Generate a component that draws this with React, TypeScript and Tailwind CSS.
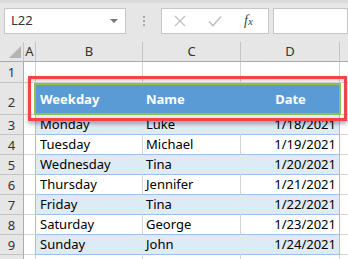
import React from "react";

// Sample table shown in the sheet
const rows = [
  { day: "Monday", name: "Luke", date: "1/18/2021" },
  { day: "Tuesday", name: "Michael", date: "1/19/2021" },
  { day: "Wednesday", name: "Tina", date: "1/20/2021" },
  { day: "Thursday", name: "Jennifer", date: "1/21/2021" },
  { day: "Friday", name: "Tina", date: "1/22/2021" },
  { day: "Saturday", name: "George", date: "1/23/2021" },
  { day: "Sunday", name: "John", date: "1/24/2021" },
];

const FormulaBar = () => (
  <div className="h-[42px] bg-[#e6e6e6] border-t-[3px] border-[#dadada] flex items-start pt-[5px] pl-[4px] gap-[4px]">
    {/* Name box */}
    <div className="w-[122px] h-[26px] bg-white border border-[#c6c6c6] flex items-center justify-between pl-[6px] pr-[7px]">
      <span className="text-[13px] text-[#333]">L22</span>
      <span className="w-0 h-0 border-l-[4px] border-r-[4px] border-t-[4px] border-l-transparent border-r-transparent border-t-[#777]" />
    </div>
    {/* Grip dots */}
    <div className="w-[27px] h-[26px] flex flex-col items-center justify-center gap-[2px]">
      <span className="w-[2px] h-[2px] bg-[#a8a8a8]" />
      <span className="w-[2px] h-[2px] bg-[#a8a8a8]" />
      <span className="w-[2px] h-[2px] bg-[#a8a8a8]" />
    </div>
    {/* Cancel / enter / fx */}
    <div className="w-[108px] h-[26px] bg-white border border-[#c6c6c6] flex items-center pl-[12px]">
      <svg width="12" height="12" viewBox="0 0 12 12" className="mr-[22px]">
        <path d="M1 1 L11 11 M11 1 L1 11" stroke="#c2c2c2" strokeWidth="1.3" />
      </svg>
      <svg width="14" height="12" viewBox="0 0 14 12" className="mr-[22px]">
        <path d="M1 6.5 L5 10.5 L13 1.5" stroke="#c2c2c2" strokeWidth="1.6" fill="none" />
      </svg>
      <span className="text-[14px] italic text-[#444] font-['Liberation_Serif',serif] leading-none">
        f<span className="text-[11px]">x</span>
      </span>
    </div>
    {/* Formula input */}
    <div className="flex-1 h-[26px] bg-white border border-[#c6c6c6]" />
  </div>
);

const colHead = "h-[20px] bg-[#e6e6e6] border-r border-b border-r-[#c4c4c4] border-b-[#ababab] text-[13px] text-[#333] flex items-center justify-center";
const rowHead = "bg-[#e6e6e6] border-r border-b border-r-[#ababab] border-b-[#c4c4c4] text-[13px] text-[#333] flex justify-center";

const App = () => {
  return (
    <div className="w-[348px] h-[259px] overflow-hidden bg-white font-['Noto_Sans',sans-serif]">
      <FormulaBar />
      <div className="relative grid grid-cols-[24px_12px_107px_98px_99px_1fr]">
        {/* Column headers */}
        <div className={colHead + " items-end justify-end pr-[2px] pb-[3px]"}>
          <span className="w-0 h-0 border-l-[12px] border-t-[12px] border-l-transparent border-t-transparent border-b-0 border-r-[0px] relative">
            <span className="absolute -left-[12px] -top-[12px] w-0 h-0 border-l-[12px] border-b-[12px] border-l-transparent border-b-[#b4b4b4]" />
          </span>
        </div>
        <div className={colHead}>A</div>
        <div className={colHead}>B</div>
        <div className={colHead}>C</div>
        <div className={colHead}>D</div>
        <div className={colHead + " border-r-0"} />

        {/* Row 1 */}
        <div className={rowHead + " h-[21px] leading-[20px]"}>1</div>
        <div className="border-r border-b border-[#d4d4d4]" />
        <div className="border-r border-b border-[#d4d4d4]" />
        <div className="border-r border-b border-[#d4d4d4]" />
        <div className="border-r border-b border-[#d4d4d4]" />
        <div className="border-b border-[#d4d4d4]" />

        {/* Row 2: table header */}
        <div className={rowHead + " h-[32px] items-end leading-[20px] pb-[2px]"}>2</div>
        <div className="border-r border-b border-[#d4d4d4]" />
        <div className="bg-[#5b9bd5] text-white font-bold text-[13px] leading-[32px] pl-[4px]">Weekday</div>
        <div className="bg-[#5b9bd5] text-white font-bold text-[13px] leading-[32px] pl-[3px]">Name</div>
        <div className="bg-[#5b9bd5] text-white font-bold text-[13px] leading-[32px] text-center">Date</div>
        <div className="border-b border-[#d4d4d4]" />

        {/* Data rows */}
        {rows.map((r, i) => {
          const band = i % 2 === 0;
          const fill = band ? "bg-[#ddebf7]" : "bg-white";
          const inner = band ? "border-r-[#ddebf7]" : "border-r-[#d4d4d4]";
          return (
            <React.Fragment key={i}>
              <div className={rowHead + " h-[20px] leading-[20px]"}>{i + 3}</div>
              <div className="border-r border-b border-r-[#9bc2e6] border-b-[#d4d4d4]" />
              <div className={`${fill} border-r border-b ${inner} border-b-[#9bc2e6] text-[13px] text-black leading-[19px] pl-[4px]`}>{r.day}</div>
              <div className={`${fill} border-r border-b ${inner} border-b-[#9bc2e6] text-[13px] text-black leading-[19px] pl-[3px]`}>{r.name}</div>
              <div className={`${fill} border-r border-b border-r-[#9bc2e6] border-b-[#9bc2e6] text-[13px] text-black leading-[19px] text-right pr-[3px]`}>{r.date}</div>
              <div className="border-b border-[#d4d4d4]" />
            </React.Fragment>
          );
        })}

        {/* Row 10 (partial) */}
        <div className={rowHead + " h-[20px]"} />
        <div className="border-r border-[#d4d4d4]" />
        <div className="border-r border-[#d4d4d4]" />
        <div className="border-r border-[#d4d4d4]" />
        <div className="border-r border-[#d4d4d4]" />
        <div />

        {/* Selection border around the header row */}
        <div className="absolute left-[34px] top-[41px] w-[307px] h-[32px] border-2 border-[#8cc152]" />
        {/* Red highlight box */}
        <div className="absolute left-[28px] top-[34px] w-[319px] h-[45px] border-[3px] border-[#f0434a] shadow-[inset_0_2px_3px_rgba(0,0,0,0.18),0_3px_4px_rgba(0,0,0,0.3)]" />
      </div>
    </div>
  );
};

export default App;
